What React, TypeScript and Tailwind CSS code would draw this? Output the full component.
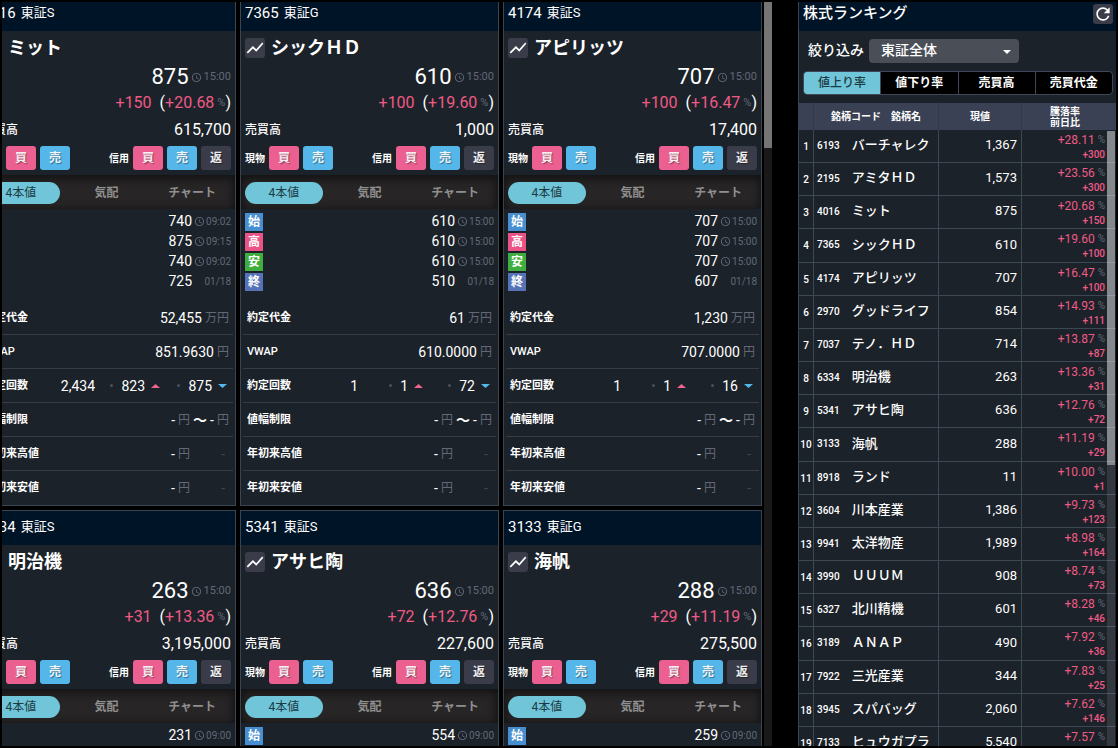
import { useState } from "react";
import { MdAccessTime, MdRefresh, MdShowChart } from "react-icons/md";

type Ohlc = [price: string, time: string];

type Stock = {
  code: string;
  market: string;
  name: string;
  price: string;
  time: string;
  diff: string;
  rate: string;
  volume: string;
  ohlc: Ohlc[];
  detail?: {
    amount: string;
    vwap: string;
    count: string;
    up: string;
    down: string;
  };
};

const stocks: Stock[] = [
  {
    code: "4016",
    market: "東証S",
    name: "ミット",
    price: "875",
    time: "15:00",
    diff: "+150",
    rate: "+20.68",
    volume: "615,700",
    ohlc: [["740", "09:02"], ["875", "09:15"], ["740", "09:02"], ["725", "01/18"]],
    detail: { amount: "52,455", vwap: "851.9630", count: "2,434", up: "823", down: "875" },
  },
  {
    code: "7365",
    market: "東証G",
    name: "シックＨＤ",
    price: "610",
    time: "15:00",
    diff: "+100",
    rate: "+19.60",
    volume: "1,000",
    ohlc: [["610", "15:00"], ["610", "15:00"], ["610", "15:00"], ["510", "01/18"]],
    detail: { amount: "61", vwap: "610.0000", count: "1", up: "1", down: "72" },
  },
  {
    code: "4174",
    market: "東証S",
    name: "アピリッツ",
    price: "707",
    time: "15:00",
    diff: "+100",
    rate: "+16.47",
    volume: "17,400",
    ohlc: [["707", "15:00"], ["707", "15:00"], ["707", "15:00"], ["607", "01/18"]],
    detail: { amount: "1,230", vwap: "707.0000", count: "1", up: "1", down: "16" },
  },
  {
    code: "6334",
    market: "東証S",
    name: "明治機",
    price: "263",
    time: "15:00",
    diff: "+31",
    rate: "+13.36",
    volume: "3,195,000",
    ohlc: [["231", "09:00"]],
  },
  {
    code: "5341",
    market: "東証S",
    name: "アサヒ陶",
    price: "636",
    time: "15:00",
    diff: "+72",
    rate: "+12.76",
    volume: "227,600",
    ohlc: [["554", "09:00"]],
  },
  {
    code: "3133",
    market: "東証G",
    name: "海帆",
    price: "288",
    time: "15:00",
    diff: "+29",
    rate: "+11.19",
    volume: "275,500",
    ohlc: [["259", "09:00"]],
  },
];

const ranking = [
  ["6193", "バーチャレク", "1,367", "+28.11", "+300"],
  ["2195", "アミタＨＤ", "1,573", "+23.56", "+300"],
  ["4016", "ミット", "875", "+20.68", "+150"],
  ["7365", "シックＨＤ", "610", "+19.60", "+100"],
  ["4174", "アピリッツ", "707", "+16.47", "+100"],
  ["2970", "グッドライフ", "854", "+14.93", "+111"],
  ["7037", "テノ．ＨＤ", "714", "+13.87", "+87"],
  ["6334", "明治機", "263", "+13.36", "+31"],
  ["5341", "アサヒ陶", "636", "+12.76", "+72"],
  ["3133", "海帆", "288", "+11.19", "+29"],
  ["8918", "ランド", "11", "+10.00", "+1"],
  ["3604", "川本産業", "1,386", "+9.73", "+123"],
  ["9941", "太洋物産", "1,989", "+8.98", "+164"],
  ["3990", "ＵＵＵＭ", "908", "+8.74", "+73"],
  ["6327", "北川精機", "601", "+8.28", "+46"],
  ["3189", "ＡＮＡＰ", "490", "+7.92", "+36"],
  ["7922", "三光産業", "344", "+7.83", "+25"],
  ["3945", "スパバッグ", "2,060", "+7.62", "+146"],
  ["7133", "ヒュウガプラ", "5,540", "+7.57", "+390"],
];

const marks = [
  { label: "始", color: "bg-[#478fd0]" },
  { label: "高", color: "bg-[#eb5286]" },
  { label: "安", color: "bg-[#3fae3f]" },
  { label: "終", color: "bg-[#5673b8]" },
];

const cardTabs = ["4本値", "気配", "チャート"];
const rankingTabs = ["値上り率", "値下り率", "売買高", "売買代金"];

function Unit({ children }: { children: React.ReactNode }) {
  return <span className="text-xs text-[#626877]">{children}</span>;
}

function OrderButton({ label, color }: { label: string; color: string }) {
  return (
    <button
      type="button"
      className={`h-6 w-[30px] rounded-[3px] text-xs font-bold text-white/90 [text-shadow:1px_1px_1px_rgba(0,0,0,0.4)] ${color}`}
    >
      {label}
    </button>
  );
}

function DetailRow({ label, children }: { label: React.ReactNode; children: React.ReactNode }) {
  return (
    <div className="flex h-[34px] items-center justify-between border-b border-[#3a3c40] px-1 last:border-transparent">
      <span className="pt-0.5 text-[11px] font-bold">{label}</span>
      <div className="flex items-center gap-[3px] text-sm">{children}</div>
    </div>
  );
}

function Count({ value, up }: { value: string; up: boolean }) {
  return (
    <span className="flex w-[67px] items-center justify-end">
      <span className="mr-2 size-[3px] rounded-full bg-[#4a5160]" />
      {value}
      <svg viewBox="0 0 9 4" className="mr-0.5 ml-1.5 h-1 w-[9px]">
        {up ? <path d="M0 4L4.5 0L9 4Z" fill="#f0628f" /> : <path d="M0 0L4.5 4L9 0Z" fill="#55b8ea" />}
      </svg>
    </span>
  );
}

function StockCard({ stock }: { stock: Stock }) {
  const [tab, setTab] = useState(cardTabs[0]);
  const { detail } = stock;

  return (
    <section className="min-h-[510px] border border-[#3b4552] bg-[#1c2229]">
      <header className="flex h-[34px] items-center gap-[5px] bg-[#001428] px-1 pb-0.5">
        <span className="text-[15px]">{stock.code}</span>
        <span className="text-[13px]">{stock.market}</span>
      </header>

      <div className="px-1 pb-[5px]">
        <div className="flex h-[34px] items-center gap-1.5 pb-px">
          <button
            type="button"
            aria-label="チャート"
            className="flex size-5 items-center justify-center rounded-[3px] bg-[#3b3c49]"
          >
            <MdShowChart className="size-5" />
          </button>
          <h2 className="text-lg font-bold">{stock.name}</h2>
        </div>

        <div className="flex h-6 items-center justify-end gap-0.5">
          <span className="text-[22px] leading-6">{stock.price}</span>
          <span className="flex items-center gap-0.5 text-[11px] text-[#626877]">
            <MdAccessTime className="size-[11px]" />
            {stock.time}
          </span>
        </div>

        <div className="flex h-7 items-center justify-end gap-2 text-base">
          <span className="text-[#ef5a86]">{stock.diff}</span>
          <span className="flex items-center">
            (<span className="text-[#ef5a86]">{stock.rate}</span>
            <span className="ml-[3px] text-[11px] text-[#626877]">%</span>)
          </span>
        </div>

        <div className="flex h-[26px] items-center justify-between">
          <span className="text-xs font-medium">売買高</span>
          <span className="text-base">{stock.volume}</span>
        </div>

        <div className="mt-[3px] flex h-6 items-center justify-between">
          <div className="flex items-center gap-1">
            <span className="text-[10px] font-bold">現物</span>
            <OrderButton label="買" color="bg-[#eb6090]" />
            <OrderButton label="売" color="bg-[#55b6ea]" />
          </div>
          <div className="flex items-center gap-1">
            <span className="text-[10px] font-bold">信用</span>
            <OrderButton label="買" color="bg-[#eb6090]" />
            <OrderButton label="売" color="bg-[#55b6ea]" />
            <OrderButton label="返" color="bg-[#3b3c49]" />
          </div>
        </div>
      </div>

      <div className="flex h-[34px] items-center gap-2 bg-[#272525] px-1 pt-0.5 shadow-[inset_0_2px_8px_2px_rgba(0,0,0,0.5)]">
        {cardTabs.map((label) => (
          <button
            key={label}
            type="button"
            onClick={() => setTab(label)}
            className={
              tab === label
                ? "h-[22px] flex-1 rounded-full bg-[#70c6d8] text-xs text-[#1c3a44]"
                : "h-[22px] flex-1 rounded-full text-xs font-bold text-[#8f8f8f]"
            }
          >
            {label}
          </button>
        ))}
      </div>

      <div className="px-1 pt-1">
        {stock.ohlc.map(([price, time], i) => (
          <div key={marks[i].label} className="mb-0.5 flex h-[18px] items-center">
            <span className={`flex size-[18px] items-center justify-center text-xs font-bold ${marks[i].color}`}>
              {marks[i].label}
            </span>
            <span className="ml-auto pb-0.5 text-sm">{price}</span>
            <span className="flex w-[39px] items-center justify-end gap-px pb-0.5 text-[10px] text-[#626877]">
              {time.includes(":") && <MdAccessTime className="size-[11px]" />}
              {time}
            </span>
          </div>
        ))}
      </div>

      {detail && (
        <div className="mt-2.5 px-0.5">
          <DetailRow label="約定代金">
            {detail.amount}
            <Unit>万円</Unit>
          </DetailRow>
          <DetailRow label={<span className="font-medium">VWAP</span>}>
            {detail.vwap}
            <Unit>円</Unit>
          </DetailRow>
          <DetailRow label="約定回数">
            <span className="flex items-center">
              {detail.count}
              <Count value={detail.up} up />
              <Count value={detail.down} up={false} />
            </span>
          </DetailRow>
          <DetailRow label="値幅制限">
            -<Unit>円</Unit>
            <span className="font-bold">〜</span>
            -<Unit>円</Unit>
          </DetailRow>
          <DetailRow label="年初来高値">
            -<Unit>円</Unit>
            <span className="w-9 pr-1 text-right text-[#3f4652]">-</span>
          </DetailRow>
          <DetailRow label="年初来安値">
            -<Unit>円</Unit>
            <span className="w-9 pr-1 text-right text-[#3f4652]">-</span>
          </DetailRow>
        </div>
      )}
    </section>
  );
}

function RankingPanel() {
  const [tab, setTab] = useState(rankingTabs[0]);

  return (
    <aside className="flex w-[318px] shrink-0 flex-col overflow-hidden border-l border-[#3b4552] bg-[#1c2229]">
      <header className="flex h-[29px] shrink-0 items-center justify-between bg-[#001428] pr-[3px] pb-[5px] pl-1">
        <h1 className="pb-0.5 text-[15px] font-medium">株式ランキング</h1>
        <button
          type="button"
          aria-label="更新"
          className="flex size-5 items-center justify-center rounded-[3px] bg-[#3b3c49]"
        >
          <MdRefresh className="size-5" stroke="currentColor" />
        </button>
      </header>

      <div className="flex items-center gap-[5px] pt-2 pl-[9px]">
        <label htmlFor="market" className="pb-0.5 text-sm font-medium">
          絞り込み
        </label>
        <div className="relative">
          <select
            id="market"
            className="block h-6 w-[150px] appearance-none rounded-sm bg-[#4a4e57] pb-0.5 pl-3 text-sm font-medium text-white"
          >
            <option>東証全体</option>
          </select>
          <svg viewBox="0 0 8 4" className="pointer-events-none absolute top-[11px] right-2 h-1 w-2">
            <path d="M0 0L4 4L8 0Z" fill="#fff" />
          </svg>
        </div>
      </div>

      <div className="mt-2 mr-[3px] ml-1 flex h-6 shrink-0 divide-x divide-[#3f4758] overflow-hidden rounded border border-[#3f4758] bg-black">
        {rankingTabs.map((label) => (
          <button
            key={label}
            type="button"
            onClick={() => setTab(label)}
            className={
              tab === label
                ? "flex-1 bg-[#70c6d8] text-xs font-medium text-[#1c3a44]"
                : "flex-1 text-xs font-bold text-white"
            }
          >
            {label}
          </button>
        ))}
      </div>

      <div className="relative mt-2 min-h-0 flex-1 overflow-hidden">
        <table className="w-full table-fixed border-separate border-spacing-0">
          <colgroup>
            <col className="w-[15px]" />
            <col className="w-[125px]" />
            <col className="w-[83px]" />
            <col />
          </colgroup>
          <thead>
            <tr className="h-[27px] bg-[#3b4155] text-[10px] leading-[11px] [&>th]:p-0 [&>th]:font-bold">
              <th className="border-r border-[#333847]" />
              <th className="border-r border-[#333847]">銘柄コード　銘柄名</th>
              <th className="border-r border-[#333847]">現値</th>
              <th>
                <div className="pr-2">
                  騰落率
                  <br />
                  前日比
                </div>
              </th>
            </tr>
          </thead>
          <tbody className="[&_td]:border-b [&_td]:border-[#3d4855] [&_td]:p-0 [&>tr]:h-[33px] [&>tr:nth-child(6n+4)]:h-[34px]">
            {ranking.map(([code, name, price, rate, diff], i) => (
              <tr key={code}>
                <td className="border-r text-center text-[10px] font-medium">{i + 1}</td>
                <td className="border-r">
                  <div className="flex items-center gap-3 pb-0.5 pl-[3px]">
                    <span className="text-[10px] font-medium">{code}</span>
                    <span className="text-[13px] leading-5 font-medium">{name}</span>
                  </div>
                </td>
                <td className="border-r text-right text-[13px]">
                  <div className="pr-1 pb-0.5">{price}</div>
                </td>
                <td>
                  <div className="pt-px pr-[11px] text-right text-[#ef5a86]">
                    <div className="flex items-center justify-end gap-[3px] text-xs leading-4">
                      {rate}
                      <span className="text-[10px] text-[#626877]">%</span>
                    </div>
                    <div className="text-[10px] leading-[14px] font-medium">{diff}</div>
                  </div>
                </td>
              </tr>
            ))}
          </tbody>
        </table>

        <div className="absolute top-7 right-px bottom-0 w-2 bg-white/10">
          <div className="h-[334px] bg-white/40" />
        </div>
      </div>
    </aside>
  );
}

export default function App() {
  return (
    <div className="flex h-screen overflow-hidden bg-black p-0.5 font-[Roboto,'Noto_Sans_CJK_JP',sans-serif] text-white">
      <main className="flex min-w-0 flex-1 justify-end overflow-hidden">
        <div className="-mt-1.5 grid shrink-0 grid-cols-[repeat(3,259px)] content-start gap-1">
          {stocks.map((stock) => (
            <StockCard key={stock.code} stock={stock} />
          ))}
        </div>
      </main>
      <div className="mr-[26px] ml-0.5 w-2 shrink-0 bg-[#191919]">
        <div className="h-[146px] bg-[#757575]" />
      </div>
      <RankingPanel />
    </div>
  );
}
